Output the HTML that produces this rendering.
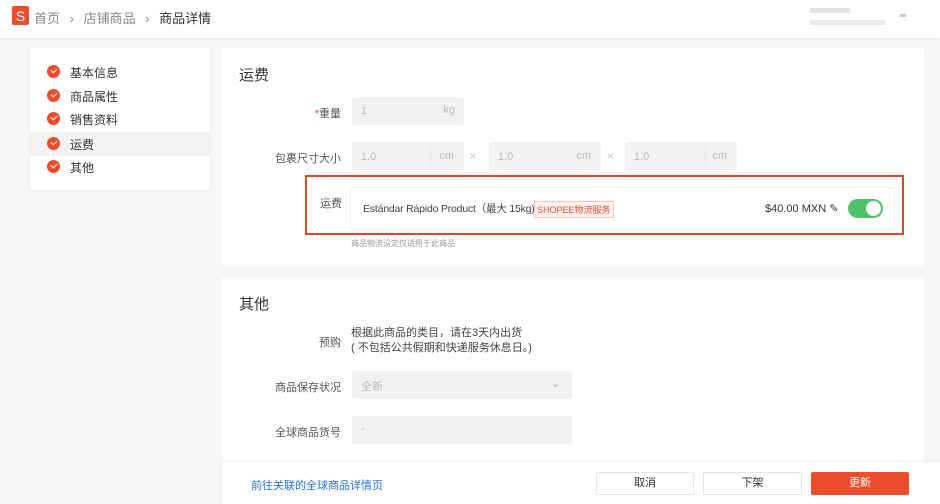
<!DOCTYPE html>
<html><head><meta charset="utf-8"><style>
*{box-sizing:border-box;margin:0;padding:0}
body{width:940px;height:504px;overflow:hidden;background:#f6f6f6;font-family:"Liberation Sans","Noto Sans CJK SC",sans-serif;color:#333;position:relative}
.abs{position:absolute}
.hdr{left:0;top:0;width:940px;height:38px;background:#fff;box-shadow:0 1px 3px rgba(0,0,0,.08)}
.card{background:#fff;border-radius:2px}
.lbl{font-size:11px;color:#555;text-align:right;width:120px}
.inp{background:#f2f2f2;border-radius:3px;height:28px;font-size:11px;color:#bbb}
.chk{width:13px;height:13px;border-radius:50%;background:#ee4d2d}
.chk:after{content:"";position:absolute;left:3.5px;top:3px;width:5px;height:3px;border-left:1.5px solid #fff;border-bottom:1.5px solid #fff;transform:rotate(-45deg)}
.btn{height:23px;border:1px solid #e5e5e5;border-radius:2px;background:#fff;font-size:11px;text-align:center;line-height:21px;color:#333}
</style></head><body>
<div class="abs hdr"></div>
<div class="abs" style="left:12px;top:6px;width:17px;height:19px;background:#ee4d2d;border-radius:2px;color:#fff;font-size:14px;text-align:center;line-height:20px">S</div>
<div class="abs" style="left:34px;top:8px;font-size:13px;color:#888">首页 <span style="margin:0 6px">›</span> 店铺商品 <span style="margin:0 6px">›</span> <span style="color:#333">商品详情</span></div>
<div class="abs" style="left:810px;top:8px;width:40px;height:5px;background:#e4e4e4"></div>
<div class="abs" style="left:810px;top:20px;width:75px;height:5px;background:#eaeaea"></div>
<div class="abs" style="left:900px;top:14px;width:6px;height:3px;background:#ccc"></div>

<div class="abs card" style="left:30px;top:48px;width:180px;height:142px;box-shadow:0 1px 3px rgba(0,0,0,.06)"></div>
<div class="abs" style="left:53px;top:72px;width:1px;height:96px;background:#eee"></div>
<div class="abs" style="left:30px;top:132px;width:180px;height:24px;background:#f3f3f3"></div>
<div class="abs chk" style="left:47px;top:65px"></div><div class="abs" style="left:70px;top:64px;font-size:12px">基本信息</div>
<div class="abs chk" style="left:47px;top:89px"></div><div class="abs" style="left:70px;top:88px;font-size:12px">商品属性</div>
<div class="abs chk" style="left:47px;top:112px"></div><div class="abs" style="left:70px;top:111px;font-size:12px">销售资料</div>
<div class="abs chk" style="left:47px;top:137px"></div><div class="abs" style="left:70px;top:136px;font-size:12px">运费</div>
<div class="abs chk" style="left:47px;top:160px"></div><div class="abs" style="left:70px;top:159px;font-size:12px">其他</div>

<div class="abs card" style="left:222px;top:48px;width:702px;height:218px"></div>
<div class="abs" style="left:239px;top:64px;font-size:15px">运费</div>
<div class="abs lbl" style="left:221px;top:105px"><span style="color:#ee4d2d">*</span>重量</div>
<div class="abs inp" style="left:352px;top:97px;width:112px"><span class="abs" style="left:9px;top:8px">1</span><span class="abs" style="right:9px;top:7px">kg</span></div>
<div class="abs lbl" style="left:221px;top:150px">包裹尺寸大小</div>
<div class="abs inp" style="left:352px;top:142px;width:112px"><span class="abs" style="left:9px;top:9px">1.0</span><span class="abs" style="left:78px;top:5px;width:1px;height:18px;background:#e4e4e4"></span><span class="abs" style="right:10px;top:8px">cm</span></div>
<div class="abs" style="left:469px;top:149px;color:#ccc;font-size:12px">×</div>
<div class="abs inp" style="left:489px;top:142px;width:112px"><span class="abs" style="left:9px;top:9px">1.0</span><span class="abs" style="right:10px;top:8px">cm</span></div>
<div class="abs" style="left:607px;top:149px;color:#ccc;font-size:12px">×</div>
<div class="abs inp" style="left:625px;top:142px;width:112px"><span class="abs" style="left:9px;top:9px">1.0</span><span class="abs" style="left:80px;top:5px;width:1px;height:18px;background:#e4e4e4"></span><span class="abs" style="right:10px;top:8px">cm</span></div>
<div class="abs" style="left:305px;top:175px;width:599px;height:60px;border:2px solid #e0452e"></div>
<div class="abs" style="left:320px;top:195px;font-size:11px;color:#555">运费</div>
<div class="abs" style="left:350px;top:187px;width:545px;height:43px;border:1px solid #efefef;border-radius:3px"></div>
<div class="abs" style="left:363px;top:201px;font-size:10.5px;color:#444;white-space:nowrap;letter-spacing:-0.2px">Estándar Rápido Product（最大 15kg)</div>
<div class="abs" style="left:534px;top:201px;font-size:9px;color:#ee4d2d;border:1px solid #f8c6bb;background:#fff4f1;padding:1px 2px">SHOPEE物流服务</div>
<div class="abs" style="left:765px;top:202px;font-size:11px;color:#333">$40.00 MXN ✎</div>
<div class="abs" style="left:848px;top:199px;width:35px;height:19px;border-radius:10px;background:#4fc16a"><div class="abs" style="right:2px;top:2px;width:15px;height:15px;border-radius:50%;background:#fff"></div></div>
<div class="abs" style="left:351px;top:238px;font-size:8px;color:#999">商品物流设定仅适用于此商品</div>

<div class="abs card" style="left:222px;top:277px;width:702px;height:185px"></div>
<div class="abs" style="left:239px;top:293px;font-size:15px">其他</div>
<div class="abs lbl" style="left:221px;top:334px">预购</div>
<div class="abs" style="left:351px;top:326px;font-size:11px;line-height:15px;color:#444">根据此商品的类目，请在3天内出货<br>( 不包括公共假期和快递服务休息日。)</div>
<div class="abs lbl" style="left:221px;top:379px">商品保存状况</div>
<div class="abs inp" style="left:352px;top:371px;width:220px"><span class="abs" style="left:9px;top:7px">全新</span><span class="abs" style="right:12px;top:6px;color:#aaa">⌄</span></div>
<div class="abs lbl" style="left:221px;top:424px">全球商品货号</div>
<div class="abs inp" style="left:352px;top:416px;width:220px"><span class="abs" style="left:9px;top:7px">-</span></div>

<div class="abs" style="left:222px;top:462px;width:718px;height:42px;background:#fff;box-shadow:0 -1px 3px rgba(0,0,0,.06)"></div>
<div class="abs" style="left:251px;top:477px;font-size:11px;color:#2673dd">前往关联的全球商品详情页</div>
<div class="abs btn" style="left:596px;top:472px;width:98px">取消</div>
<div class="abs btn" style="left:703px;top:472px;width:99px">下架</div>
<div class="abs btn" style="left:811px;top:472px;width:98px;background:#ee4d2d;border-color:#ee4d2d;color:#fff">更新</div>
</body></html>
